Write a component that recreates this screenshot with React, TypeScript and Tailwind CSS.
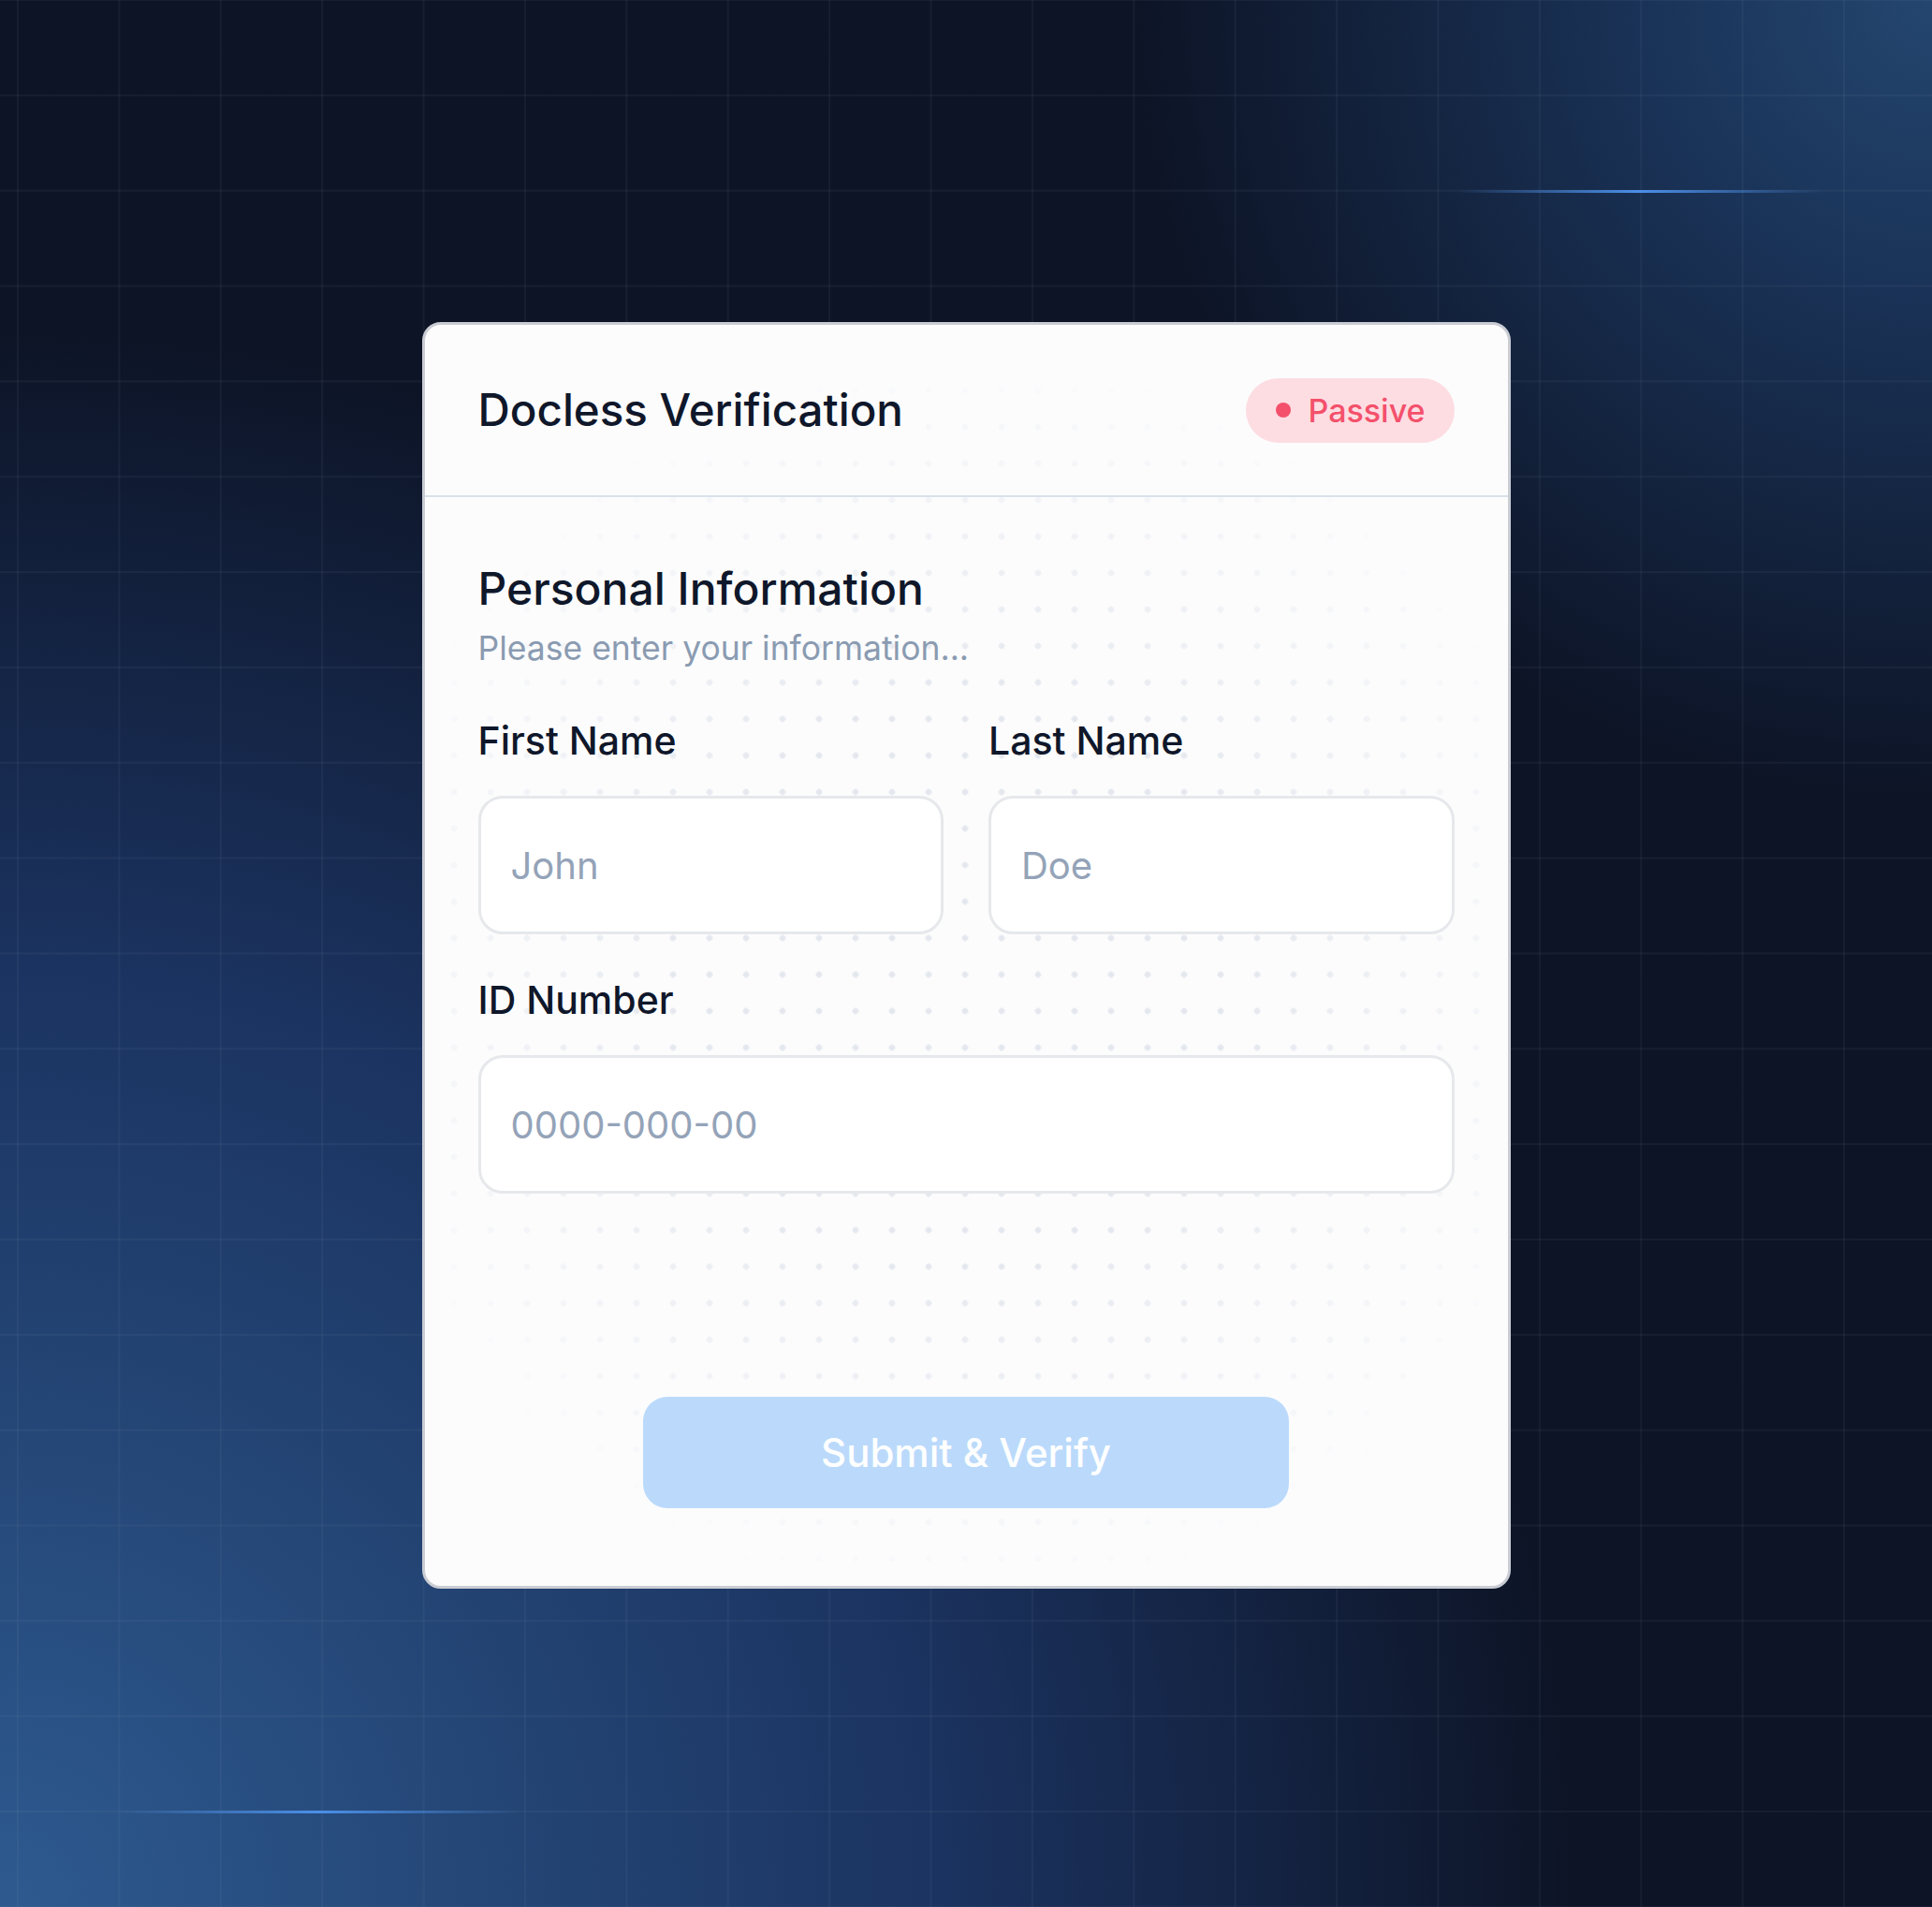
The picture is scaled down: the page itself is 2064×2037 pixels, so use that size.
function Field({ label, placeholder }: { label: string; placeholder: string }) {
  return (
    <label className="flex flex-col">
      <span className="text-[41px] font-medium leading-[50px] text-[#0f172a]">{label}</span>
      <input
        type="text"
        placeholder={placeholder}
        className="mt-[34px] h-[148px] w-full rounded-[26px] border-[3px] border-[#e6e8eb] bg-white px-[32px] text-[40px] text-[#0f172a] outline-none placeholder:text-[#94a3b8]"
      />
    </label>
  );
}

export default function App() {
  return (
    <div className="relative flex min-h-screen w-full items-center justify-center overflow-hidden bg-[#0d1426] font-['Inter','Noto_Sans',sans-serif]">
      {/* background glow */}
      <div className="pointer-events-none absolute inset-0 bg-[radial-gradient(circle_2100px_at_0%_100%,#2e5a90_0%,#244676_25%,#1b3360_48%,rgba(14,21,39,0)_80%),radial-gradient(circle_850px_at_100%_0%,#24466f_0%,#1a3358_35%,rgba(14,21,39,0)_100%)]" />
      {/* grid */}
      <div className="pointer-events-none absolute inset-0 bg-[linear-gradient(to_right,rgba(148,163,184,0.07)_2px,transparent_2px),linear-gradient(to_bottom,rgba(148,163,184,0.07)_2px,transparent_2px)] [background-size:108.4px_101.85px] [background-position:18px_-1px]" />
      {/* glow lines */}
      <div className="pointer-events-none absolute left-[1557px] top-[203px] h-[3px] w-[390px] bg-[linear-gradient(to_right,transparent,#4b8fe8_50%,transparent)]" />
      <div className="pointer-events-none absolute left-[125px] top-[1934px] h-[3px] w-[430px] bg-[linear-gradient(to_right,transparent,#4b8fe8_50%,transparent)]" />

      {/* card */}
      <div className="relative mt-[4px] w-[1163px] overflow-hidden rounded-[20px] border-[3px] border-[#c9ccd3] bg-[#fcfcfd]">
        <div className="pointer-events-none absolute inset-0 bg-[radial-gradient(circle,#e4e8ee_3px,transparent_3.5px)] [background-size:39px_39px] [background-position:11.5px_11.5px] [mask-image:radial-gradient(ellipse_58%_50%_at_50%_52%,black_45%,transparent_100%)] [-webkit-mask-image:radial-gradient(ellipse_58%_50%_at_50%_52%,black_45%,transparent_100%)]" />

        <div className="relative">
          {/* header */}
          <div className="flex h-[182px] items-center justify-between px-[57px]">
            <h1 className="text-[47.5px] font-medium leading-none text-[#0f172a]">Docless Verification</h1>
            <span className="flex h-[69px] items-center gap-[18px] rounded-full bg-[#fddde2] pl-[32px] pr-[31px] text-[34px] font-medium text-[#f4506b]">
              <span className="h-[16px] w-[16px] rounded-full bg-[#f4506b]" />
              Passive
            </span>
          </div>
          <div className="h-[2px] bg-[#d9e1ea]" />

          {/* body */}
          <div className="px-[57px] pb-[83px] pt-[70px]">
            <h2 className="text-[48px] font-medium leading-[56px] text-[#0f172a]">Personal Information</h2>
            <p className="mt-[13px] text-[35.5px] leading-[46px] text-[#8a9bb1]">Please enter your information...</p>

            <div className="mt-[50px] grid grid-cols-2 gap-x-[48px]">
              <Field label="First Name" placeholder="John" />
              <Field label="Last Name" placeholder="Doe" />
            </div>

            <div className="mt-[45px]">
              <Field label="ID Number" placeholder="0000-000-00" />
            </div>

            <div className="mt-[217px] flex justify-center">
              <button
                type="submit"
                className="h-[119px] w-[690px] rounded-[26px] bg-[#bbdafb] text-[42px] font-medium text-white"
              >
                Submit &amp; Verify
              </button>
            </div>
          </div>
        </div>
      </div>
    </div>
  );
}
